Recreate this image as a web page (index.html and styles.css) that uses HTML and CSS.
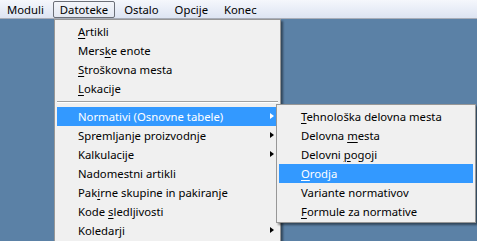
FILE: index.html
```html
<!DOCTYPE html>
<html>
<head>
<meta charset="utf-8">
<link rel="stylesheet" href="styles.css">
</head>
<body>
<div class="app">
  <div class="menubar">
    <span class="mb-item">Moduli</span>
    <span class="mb-item active">Datoteke</span>
    <span class="mb-item">Ostalo</span>
    <span class="mb-item">Opcije</span>
    <span class="mb-item">Konec</span>
  </div>

  <div class="menu main-menu">
    <div class="mi"><span><u>A</u>rtikli</span></div>
    <div class="mi"><span>Mers<u>k</u>e enote</span></div>
    <div class="mi"><span><u>S</u>troškovna mesta</span></div>
    <div class="mi"><span><u>L</u>okacije</span></div>
    <div class="sep"></div>
    <div class="mi hl"><span>Normativi (Osnovne tabele)</span><i class="arrow"></i></div>
    <div class="mi"><span>Spremljanje proizvodnje</span><i class="arrow"></i></div>
    <div class="mi"><span>Kalkulacije</span><i class="arrow"></i></div>
    <div class="mi"><span>Nadomestni artikli</span></div>
    <div class="mi"><span>Pak<u>i</u>rne skupine in pakiranje</span></div>
    <div class="mi"><span>Kode <u>s</u>ledljivosti</span></div>
    <div class="mi"><span>Koledarji</span><i class="arrow"></i></div>
  </div>

  <div class="menu sub-menu">
    <div class="mi"><span><u>T</u>ehnološka delovna mesta</span></div>
    <div class="mi"><span>Delovna <u>m</u>esta</span></div>
    <div class="mi"><span>Delovni <u>p</u>ogoji</span></div>
    <div class="mi hl"><span><u>O</u>rodja</span></div>
    <div class="mi"><span>Variante normativov</span></div>
    <div class="mi"><span><u>F</u>ormule za normative</span></div>
  </div>
</div>
</body>
</html>
```
FILE: styles.css
```css
html, body {
  margin: 0;
  padding: 0;
}
body {
  width: 477px;
  height: 241px;
  overflow: hidden;
  background: #5b81a6;
  font-family: "Noto Sans", "DejaVu Sans", sans-serif;
  font-size: 11.3px;
  color: #000;
}
.app {
  position: relative;
  width: 477px;
  height: 241px;
  overflow: hidden;
}
.menubar {
  height: 18px;
  display: flex;
  align-items: center;
  padding-left: 0;
  background: linear-gradient(#f5f7fc, #dde4f2);
  border-bottom: 1px solid #a8adb8;
  box-sizing: content-box;
}
.mb-item {
  padding: 0 6px;
  height: 15px;
  line-height: 15px;
  border: 1px solid transparent;
  margin-right: 2px;
}
.mb-item.active {
  border-color: #6b6f78;
  border-radius: 2px;
  background: linear-gradient(#f3f5fa, #e3e8f2);
}
.menu {
  position: absolute;
  background: #f0f0f0;
  border: 1px solid #979797;
  box-shadow: 2px 2px 2px rgba(0,0,0,0.45);
  padding: 2px;
  box-sizing: border-box;
}
.main-menu {
  left: 54px;
  top: 19px;
  width: 227px;
  height: 222px;
  border-bottom: none;
}
.sub-menu {
  left: 276px;
  top: 104px;
  width: 200px;
  padding-bottom: 1px;
}
.mi {
  position: relative;
  height: 19px;
  line-height: 19px;
  display: flex;
  align-items: center;
}
.main-menu .mi { padding-left: 21px; }
.sub-menu .mi { padding-left: 22px; }
.mi u {
  text-decoration: underline;
  text-underline-offset: 2px;
}
.mi.hl {
  background: #3399ff;
  color: #fff;
}
.arrow {
  position: absolute;
  left: 213px;
  top: 6px;
  width: 0;
  height: 0;
  border-top: 3.5px solid transparent;
  border-bottom: 3.5px solid transparent;
  border-left: 4px solid #000;
}
.mi.hl .arrow {
  border-left-color: #fff;
}
.sep {
  height: 9px;
  position: relative;
}
.sep::before {
  content: "";
  position: absolute;
  left: 0;
  right: 0;
  top: 3px;
  border-top: 1px solid #a0a0a0;
  border-bottom: 1px solid #ffffff;
}
```
